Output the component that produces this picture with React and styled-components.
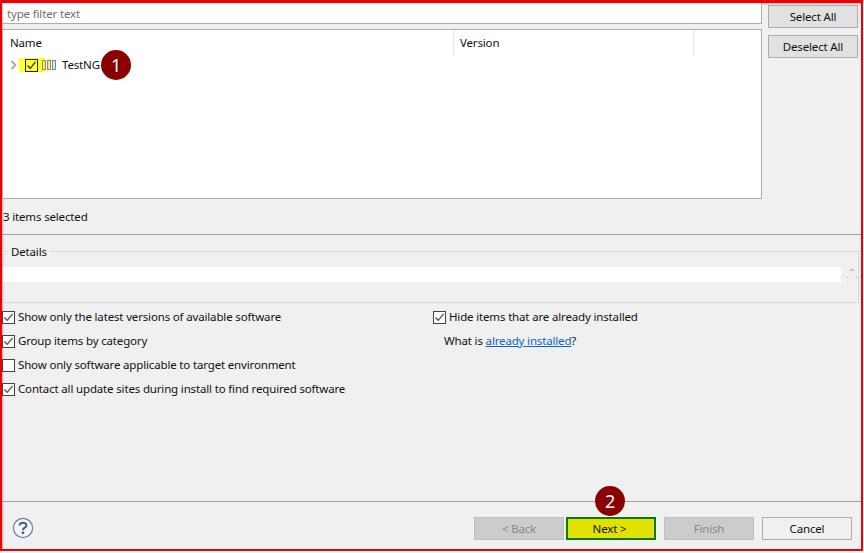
import React from "react";
import styled, { createGlobalStyle } from "styled-components";

const Global = createGlobalStyle`
  html, body { margin: 0; padding: 0; background: #fff; }
  #root { width: 864px; height: 553px; overflow: hidden; }
  * { box-sizing: border-box; }
`;

const Frame = styled.div`
  position: relative;
  width: 863px;
  height: 551px;
  border: 2px solid #f00000;
  border-top-width: 3px;
  background: #f0f0f0;
  box-shadow: inset 1px 1px 2px rgba(0, 0, 0, 0.25);
  color: #111;
  font: 11.5px/16px "Noto Sans", sans-serif;
  letter-spacing: -0.16px;
  display: flex;
  flex-direction: column;
  overflow: visible;
`;
const TopArea = styled.div`
  display: grid;
  grid-template-columns: 760px 90px;
  column-gap: 6px;
  height: 196px;
`;
const LeftCol = styled.div`
  display: flex;
  flex-direction: column;
  gap: 5px;
`;
const Filter = styled.div`
  height: 21px;
  background: #fff;
  border: 1px solid #adadad;
  border-top: none;
  border-left-color: #d4d4d4;
  padding: 3px 4px;
  color: #6d6d6d;
`;
const Tree = styled.div`
  flex: 1;
  background: #fff;
  border: 1px solid #adadad;
  display: flex;
  flex-direction: column;
`;
const Header = styled.div`
  display: flex;
  height: 25px;
`;
const Col = styled.div`
  width: ${(p) => p.$w}px;
  padding: 5px 0 0 ${(p) => p.$pad}px;
  border-right: 1px solid #e5e5e5;
`;
const Row = styled.div`
  display: flex;
  align-items: center;
  height: 18px;
  margin-top: 1px;
  padding-left: 7px;
`;
const Highlight = styled.span`
  display: flex;
  align-items: center;
  background: #ffff33;
  width: 26px;
  height: 14px;
  margin-left: 1px;
  padding-left: 6px;
`;
const TreeBox = styled.span`
  width: 13px;
  height: 13px;
  border: 1px solid #222;
  background: #ffff33;
  display: flex;
`;
const RowLabel = styled.span`
  margin-left: 5px;
`;
const Side = styled.div`
  display: flex;
  flex-direction: column;
  gap: 7px;
  padding-top: 2px;
`;
const Btn = styled.button`
  width: 90px;
  height: 23px;
  padding: 0;
  font: inherit;
  letter-spacing: inherit;
  color: ${(p) => (p.disabled ? "#8a8a8a" : "#111")};
  background: ${(p) => (p.disabled ? "#cccccc" : p.$plain ? "#f0f0f0" : "#e1e1e1")};
  border: 1px solid ${(p) => (p.disabled ? "#bfbfbf" : "#adadad")};
`;
const Next = styled(Btn)`
  background: #e2e200;
  border: 2px solid #0a7a0a;
  padding-right: 3px;
`;
const Status = styled.div`
  height: 36px;
  padding: 10px 0 0 1px;
  border-bottom: 1px solid #a0a0a0;
`;
const Details = styled.div`
  position: relative;
  margin-top: 16px;
  height: 52px;
  width: 857px;
  border: 1px solid #d8d8d8;
  border-left: none;
  padding-top: 14px;
`;
const Legend = styled.span`
  position: absolute;
  left: 5px;
  top: -8px;
  padding: 0 3px 0 4px;
  background: #f0f0f0;
`;
const DetailRow = styled.div`
  display: flex;
  align-items: center;
  gap: 6px;
`;
const DetailField = styled.div`
  width: 838px;
  height: 15px;
  background: #fff;
  margin-left: 1px;
`;
const Options = styled.div`
  display: grid;
  grid-template-columns: 431px 1fr;
  padding: 2px 0 0 0;
  flex: 1;
`;
const OptionCol = styled.div`
  display: flex;
  flex-direction: column;
`;
const Opt = styled.label`
  display: flex;
  align-items: center;
  gap: 3px;
  height: 24px;
`;
const Box = styled.span`
  width: 13px;
  height: 13px;
  flex: none;
  border: 1px solid #444;
  background: #fff;
  display: flex;
`;
const Info = styled.div`
  height: 24px;
  line-height: 24px;
  padding-left: 11px;
`;
const Link = styled.a`
  color: #0a66c8;
  text-decoration: underline;
`;
const Footer = styled.div`
  height: 48px;
  border-top: 1px solid #a0a0a0;
  display: flex;
  align-items: flex-start;
  padding: 15px 9px 0 10px;
`;
const Buttons = styled.div`
  margin-left: auto;
  display: flex;
  gap: 8px;
`;
const BackNext = styled.div`
  display: flex;
  gap: 2px;
`;
const Badge = styled.div`
  position: absolute;
  width: 30px;
  height: 30px;
  border-radius: 50%;
  background: #8b0000;
  color: #fff;
  font-size: 18px;
  line-height: 30px;
  text-align: center;
  left: ${(p) => p.$x}px;
  top: ${(p) => p.$y}px;
`;

const Check = ({ color = "#555" }) => (
  <svg width="11" height="11" viewBox="0 0 11 11">
    <path d="M1.5 5.5 L4.2 8.3 L9.5 2" fill="none" stroke={color} strokeWidth="1.3" />
  </svg>
);
const Chevron = () => (
  <svg width="8" height="10" viewBox="0 0 8 10" style={{ flex: "none" }}>
    <path d="M1.5 1 L5.5 5 L1.5 9" fill="none" stroke="#a8a8a8" strokeWidth="1.8" />
  </svg>
);
const Features = () => (
  <svg width="15" height="10" viewBox="0 0 15 10" style={{ marginLeft: -3, flex: "none" }}>
    <rect x="0.5" y="0.5" width="3" height="9" fill="#dfe9b8" stroke="#8aa02c" />
    <rect x="5.5" y="0.5" width="3" height="9" fill="#f1dfb0" stroke="#b8862c" />
    <rect x="10.5" y="0.5" width="3" height="9" fill="#dde6f2" stroke="#6f88aa" />
  </svg>
);
const Help = () => (
  <svg width="22" height="22" viewBox="0 0 22 22">
    <circle cx="11" cy="11" r="9.6" fill="#f4f6f9" stroke="#6c7f9c" strokeWidth="1.2" />
    <path d="M7.6 8.4 C7.8 4.8 14.4 4.8 14.4 8.4 C14.4 10.8 11 10.6 11 13.2" fill="none" stroke="#4a5f80" strokeWidth="2.1" />
    <rect x="9.8" y="14.6" width="2.4" height="2.4" fill="#4a5f80" />
  </svg>
);
const Spinner = () => (
  <svg width="10" height="16" viewBox="0 0 10 16" style={{ flex: "none" }}>
    <path d="M5 2 L8 5 H2 Z" fill="#c4c4c4" />
    <path d="M0 10 L2 12 L4 12 H0 Z M10 10 L8 12 L6 12 H10 Z" fill="#c4c4c4" />
  </svg>
);

const Option = ({ checked, children }) => (
  <Opt>
    <Box>{checked && <Check />}</Box>
    <span>{children}</span>
  </Opt>
);

export default function App() {
  return (
    <>
      <Global />
      <Frame>
        <TopArea>
          <LeftCol>
            <Filter>type filter text</Filter>
            <Tree>
              <Header>
                <Col $w={451} $pad={7}>Name</Col>
                <Col $w={240} $pad={6}>Version</Col>
              </Header>
              <Row>
                <Chevron />
                <Highlight>
                  <TreeBox><Check color="#333" /></TreeBox>
                </Highlight>
                <Features />
                <RowLabel>TestNG</RowLabel>
              </Row>
            </Tree>
          </LeftCol>
          <Side>
            <Btn>Select All</Btn>
            <Btn>Deselect All</Btn>
          </Side>
        </TopArea>
        <Status>3 items selected</Status>
        <Details>
          <Legend>Details</Legend>
          <DetailRow>
            <DetailField />
            <Spinner />
          </DetailRow>
        </Details>
        <Options>
          <OptionCol>
            <Option checked>Show only the latest versions of available software</Option>
            <Option checked>Group items by category</Option>
            <Option>Show only software applicable to target environment</Option>
            <Option checked>Contact all update sites during install to find required software</Option>
          </OptionCol>
          <OptionCol>
            <Option checked>Hide items that are already installed</Option>
            <Info>What is <Link href="#">already installed</Link>?</Info>
          </OptionCol>
        </Options>
        <Footer>
          <Help />
          <Buttons>
            <BackNext>
              <Btn disabled>&lt; Back</Btn>
              <Next>Next &gt;</Next>
            </BackNext>
            <Btn disabled>Finish</Btn>
            <Btn $plain>Cancel</Btn>
          </Buttons>
        </Footer>
        <Badge $x={99} $y={47}>1</Badge>
        <Badge $x={593} $y={483}>2</Badge>
      </Frame>
    </>
  );
}
